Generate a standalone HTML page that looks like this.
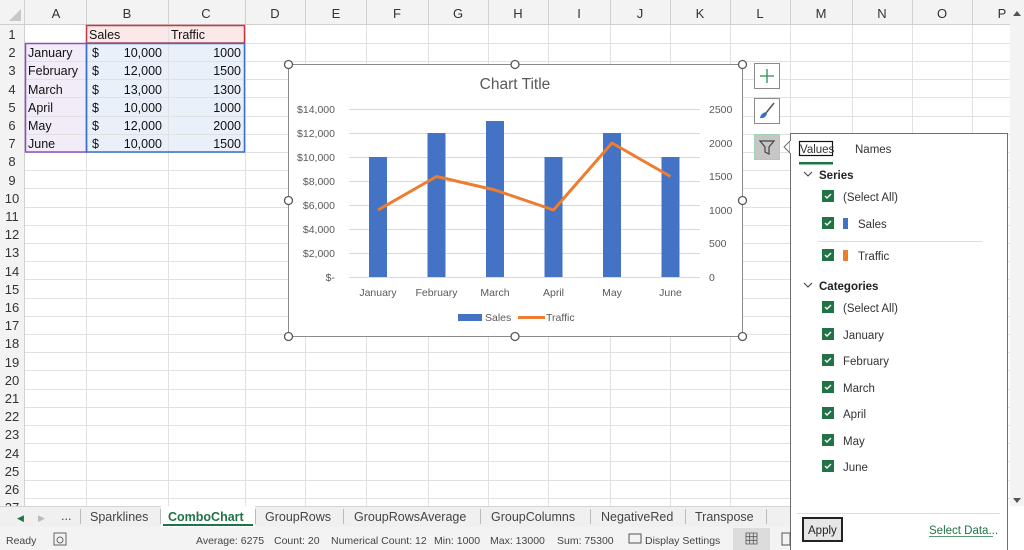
<!DOCTYPE html>
<html><head><meta charset="utf-8"><style>
html,body{margin:0;padding:0;width:1024px;height:550px;overflow:hidden;background:#fff;font-family:"Liberation Sans",sans-serif}
svg text{font-family:"Liberation Sans",sans-serif}
</style></head><body>
<svg width="1024" height="550" viewBox="0 0 1024 550" xmlns="http://www.w3.org/2000/svg">
<!-- header backgrounds -->
<rect x="0" y="0" width="1010" height="25" fill="#f3f3f3"/>
<rect x="0" y="0" width="25" height="506" fill="#f3f3f3"/>
<polygon points="9,21 21,21 21,9" fill="#c8c8c8"/>
<!-- selection shading -->
<rect x="86" y="25" width="159" height="18.2" fill="#fbe9e9"/>
<rect x="25" y="43.2" width="61" height="109.2" fill="#f1ecf7"/>
<rect x="86" y="43.2" width="159" height="109.2" fill="#eaf0fa"/>
<!-- grid -->
<g stroke="#e1e1e1" stroke-width="1">
<line x1="25" y1="43.5" x2="1010" y2="43.5"/><line x1="25" y1="61.5" x2="1010" y2="61.5"/><line x1="25" y1="79.5" x2="1010" y2="79.5"/><line x1="25" y1="97.5" x2="1010" y2="97.5"/><line x1="25" y1="116.5" x2="1010" y2="116.5"/><line x1="25" y1="134.5" x2="1010" y2="134.5"/><line x1="25" y1="152.5" x2="1010" y2="152.5"/><line x1="25" y1="170.5" x2="1010" y2="170.5"/><line x1="25" y1="188.5" x2="1010" y2="188.5"/><line x1="25" y1="207.5" x2="1010" y2="207.5"/><line x1="25" y1="225.5" x2="1010" y2="225.5"/><line x1="25" y1="243.5" x2="1010" y2="243.5"/><line x1="25" y1="261.5" x2="1010" y2="261.5"/><line x1="25" y1="279.5" x2="1010" y2="279.5"/><line x1="25" y1="298.5" x2="1010" y2="298.5"/><line x1="25" y1="316.5" x2="1010" y2="316.5"/><line x1="25" y1="334.5" x2="1010" y2="334.5"/><line x1="25" y1="352.5" x2="1010" y2="352.5"/><line x1="25" y1="370.5" x2="1010" y2="370.5"/><line x1="25" y1="389.5" x2="1010" y2="389.5"/><line x1="25" y1="407.5" x2="1010" y2="407.5"/><line x1="25" y1="425.5" x2="1010" y2="425.5"/><line x1="25" y1="443.5" x2="1010" y2="443.5"/><line x1="25" y1="461.5" x2="1010" y2="461.5"/><line x1="25" y1="480.5" x2="1010" y2="480.5"/><line x1="25" y1="498.5" x2="1010" y2="498.5"/>
<line x1="86.5" y1="25" x2="86.5" y2="506"/><line x1="168.5" y1="25" x2="168.5" y2="506"/><line x1="245.5" y1="25" x2="245.5" y2="506"/><line x1="305.5" y1="25" x2="305.5" y2="506"/><line x1="366.5" y1="25" x2="366.5" y2="506"/><line x1="428.5" y1="25" x2="428.5" y2="506"/><line x1="488.5" y1="25" x2="488.5" y2="506"/><line x1="548.5" y1="25" x2="548.5" y2="506"/><line x1="610.5" y1="25" x2="610.5" y2="506"/><line x1="670.5" y1="25" x2="670.5" y2="506"/><line x1="730.5" y1="25" x2="730.5" y2="506"/><line x1="790.5" y1="25" x2="790.5" y2="506"/><line x1="852.5" y1="25" x2="852.5" y2="506"/><line x1="912.5" y1="25" x2="912.5" y2="506"/><line x1="972.5" y1="25" x2="972.5" y2="506"/>
</g>
<g stroke="#d0d0d0">
<line x1="0" y1="24.5" x2="1010" y2="24.5"/><line x1="24.5" y1="0" x2="24.5" y2="506"/>
<line x1="86.5" y1="0" x2="86.5" y2="25"/><line x1="168.5" y1="0" x2="168.5" y2="25"/><line x1="245.5" y1="0" x2="245.5" y2="25"/><line x1="305.5" y1="0" x2="305.5" y2="25"/><line x1="366.5" y1="0" x2="366.5" y2="25"/><line x1="428.5" y1="0" x2="428.5" y2="25"/><line x1="488.5" y1="0" x2="488.5" y2="25"/><line x1="548.5" y1="0" x2="548.5" y2="25"/><line x1="610.5" y1="0" x2="610.5" y2="25"/><line x1="670.5" y1="0" x2="670.5" y2="25"/><line x1="730.5" y1="0" x2="730.5" y2="25"/><line x1="790.5" y1="0" x2="790.5" y2="25"/><line x1="852.5" y1="0" x2="852.5" y2="25"/><line x1="912.5" y1="0" x2="912.5" y2="25"/><line x1="972.5" y1="0" x2="972.5" y2="25"/>
</g>
<g font-size="13" fill="#333" text-anchor="middle">
<text x="56" y="18">A</text><text x="127" y="18">B</text><text x="206" y="18">C</text><text x="275" y="18">D</text><text x="336" y="18">E</text><text x="397" y="18">F</text><text x="458" y="18">G</text><text x="518" y="18">H</text><text x="579" y="18">I</text><text x="640" y="18">J</text><text x="700" y="18">K</text><text x="760" y="18">L</text><text x="821" y="18">M</text><text x="882" y="18">N</text><text x="942" y="18">O</text><text x="1002" y="18">P</text>
<text x="12" y="39">1</text><text x="12" y="57">2</text><text x="12" y="75">3</text><text x="12" y="94">4</text><text x="12" y="112">5</text><text x="12" y="130">6</text><text x="12" y="148">7</text><text x="12" y="166">8</text><text x="12" y="185">9</text><text x="12" y="203">10</text><text x="12" y="221">11</text><text x="12" y="239">12</text><text x="12" y="257">13</text><text x="12" y="276">14</text><text x="12" y="294">15</text><text x="12" y="312">16</text><text x="12" y="330">17</text><text x="12" y="348">18</text><text x="12" y="367">19</text><text x="12" y="385">20</text><text x="12" y="403">21</text><text x="12" y="421">22</text><text x="12" y="439">23</text><text x="12" y="458">24</text><text x="12" y="476">25</text><text x="12" y="494">26</text><text x="12" y="512">27</text>
</g>
<!-- data -->
<g font-size="12.5" fill="#111">
<text x="89" y="39">Sales</text><text x="171" y="39">Traffic</text>
<text x="28" y="57">January</text><text x="28" y="75">February</text><text x="28" y="94">March</text><text x="28" y="112">April</text><text x="28" y="130">May</text><text x="28" y="148">June</text>
<text x="92" y="57">$</text><text x="92" y="75">$</text><text x="92" y="94">$</text><text x="92" y="112">$</text><text x="92" y="130">$</text><text x="92" y="148">$</text>
</g>
<g font-size="12.5" fill="#111" text-anchor="end">
<text x="162" y="57">10,000</text><text x="162" y="75">12,000</text><text x="162" y="94">13,000</text><text x="162" y="112">10,000</text><text x="162" y="130">12,000</text><text x="162" y="148">10,000</text>
<text x="241" y="57">1000</text><text x="241" y="75">1500</text><text x="241" y="94">1300</text><text x="241" y="112">1000</text><text x="241" y="130">2000</text><text x="241" y="148">1500</text>
</g>
<!-- range outlines -->
<rect x="86.5" y="25.5" width="158" height="17.5" fill="none" stroke="#c8383f" stroke-width="1.5"/>
<rect x="25.5" y="43.5" width="61" height="108.5" fill="none" stroke="#8d4fc7" stroke-width="1.5"/>
<rect x="86.5" y="43.5" width="158" height="108.5" fill="none" stroke="#3b6dc9" stroke-width="1.5"/>
<!-- chart -->
<rect x="288.5" y="64.5" width="454" height="272" fill="#fff" stroke="#8a8a8a"/>
<text x="515" y="89" font-size="15.5" fill="#595959" text-anchor="middle">Chart Title</text>
<g stroke="#d9d9d9"><line x1="349" y1="109.5" x2="700" y2="109.5"/><line x1="349" y1="133.5" x2="700" y2="133.5"/><line x1="349" y1="157.5" x2="700" y2="157.5"/><line x1="349" y1="181.5" x2="700" y2="181.5"/><line x1="349" y1="205.5" x2="700" y2="205.5"/><line x1="349" y1="229.5" x2="700" y2="229.5"/><line x1="349" y1="253.5" x2="700" y2="253.5"/><line x1="349" y1="277.5" x2="700" y2="277.5"/></g>
<g font-size="10.5" fill="#595959" text-anchor="end">
<text x="335" y="113">$14,000</text><text x="335" y="137">$12,000</text><text x="335" y="161">$10,000</text><text x="335" y="185">$8,000</text><text x="335" y="209">$6,000</text><text x="335" y="233">$4,000</text><text x="335" y="257">$2,000</text><text x="335" y="281">$-</text>
</g>
<g font-size="10.5" fill="#595959">
<text x="709" y="113">2500</text><text x="709" y="147">2000</text><text x="709" y="180">1500</text><text x="709" y="214">1000</text><text x="709" y="247">500</text><text x="709" y="281">0</text>
</g>
<g fill="#4472c4">
<rect x="369" y="157" width="18" height="120"/><rect x="427.5" y="133" width="18" height="144"/><rect x="486" y="121" width="18" height="156"/><rect x="544.5" y="157" width="18" height="120"/><rect x="603" y="133" width="18" height="144"/><rect x="661.5" y="157" width="18" height="120"/>
</g>
<polyline points="378,210 436.5,176.5 495,190 553.5,210 612,143 670.5,176.5" fill="none" stroke="#ed7d31" stroke-width="3" stroke-linejoin="round"/>
<g font-size="10.5" fill="#595959" text-anchor="middle">
<text x="378" y="296">January</text><text x="436.5" y="296">February</text><text x="495" y="296">March</text><text x="553.5" y="296">April</text><text x="612" y="296">May</text><text x="670.5" y="296">June</text>
</g>
<rect x="458" y="314" width="24" height="7" fill="#4472c4"/>
<text x="485" y="321" font-size="10.5" fill="#595959">Sales</text>
<line x1="518" y1="317.5" x2="545" y2="317.5" stroke="#ed7d31" stroke-width="3"/>
<text x="546" y="321" font-size="10.5" fill="#595959">Traffic</text>
<g fill="#fff" stroke="#595959" stroke-width="1.3">
<circle cx="288.5" cy="64.5" r="4"/><circle cx="515" cy="64.5" r="4"/><circle cx="742.5" cy="64.5" r="4"/><circle cx="288.5" cy="200.5" r="4"/><circle cx="742.5" cy="200.5" r="4"/><circle cx="288.5" cy="336.5" r="4"/><circle cx="515" cy="336.5" r="4"/><circle cx="742.5" cy="336.5" r="4"/>
</g>
<!-- side buttons -->
<rect x="754.5" y="63.5" width="25" height="25" fill="#fff" stroke="#8a8a8a"/>
<path d="M767 69v14M760 76h14" stroke="#2e8b57" stroke-width="1.3"/>
<rect x="754.5" y="98.5" width="25" height="25" fill="#fff" stroke="#8a8a8a"/>
<path d="M774 103 L766 113" stroke="#555" stroke-width="1.5"/><path d="M766 112 Q761 113 760 118 Q765 119 767 114 Z" fill="#3b6dc9"/>
<rect x="754.5" y="134.5" width="25" height="25" fill="#c6c6c6" stroke="#9fd3b5"/>
<path d="M760 141h14l-5 6v7l-4 -2v-5z" fill="none" stroke="#444" stroke-width="1.2"/>
<!-- scrollbar -->
<rect x="1010" y="0" width="14" height="506" fill="#f3f3f3"/>
<polygon points="1013,16 1021,16 1017,11" fill="#555"/>
<polygon points="1013,498 1021,498 1017,503" fill="#555"/>
<!-- panel -->
<rect x="790.5" y="133.5" width="217" height="418" fill="#fff" stroke="#6e6e6e"/>
<polygon points="790,141 784,147 790,153" fill="#fff" stroke="#6e6e6e"/>
<line x1="791" y1="141" x2="791" y2="153" stroke="#fff" stroke-width="2"/>
<rect x="799.5" y="141.5" width="33" height="14" fill="none" stroke="#111" stroke-width="1.2"/>
<text x="800" y="153" font-size="11.5" fill="#333">Values</text>
<text x="855" y="153" font-size="11.5" fill="#333">Names</text>
<rect x="799" y="162" width="34" height="2.5" fill="#217346"/>
<path d="M804 172l4 4 4-4" fill="none" stroke="#444" stroke-width="1.1"/>
<text x="819" y="179" font-size="11.5" font-weight="bold" fill="#222">Series</text>
<path d="M804 283l4 4 4-4" fill="none" stroke="#444" stroke-width="1.1"/>
<text x="819" y="290" font-size="11.5" font-weight="bold" fill="#222">Categories</text>
<line x1="818" y1="241.5" x2="982" y2="241.5" stroke="#ddd"/>
<g fill="#217346">
<rect x="822" y="190" width="12" height="12"/><rect x="822" y="217" width="12" height="12"/><rect x="822" y="249" width="12" height="12"/><rect x="822" y="301" width="12" height="12"/><rect x="822" y="328" width="12" height="12"/><rect x="822" y="354" width="12" height="12"/><rect x="822" y="381" width="12" height="12"/><rect x="822" y="407" width="12" height="12"/><rect x="822" y="434" width="12" height="12"/><rect x="822" y="460" width="12" height="12"/>
</g>
<g fill="none" stroke="#fff" stroke-width="1.4">
<path d="M825 196l2 2 4-4"/><path d="M825 223l2 2 4-4"/><path d="M825 255l2 2 4-4"/><path d="M825 307l2 2 4-4"/><path d="M825 334l2 2 4-4"/><path d="M825 360l2 2 4-4"/><path d="M825 387l2 2 4-4"/><path d="M825 413l2 2 4-4"/><path d="M825 440l2 2 4-4"/><path d="M825 466l2 2 4-4"/>
</g>
<rect x="843" y="218" width="5" height="11" fill="#4472c4"/>
<rect x="843" y="250" width="5" height="11" fill="#ed7d31"/>
<g font-size="11.5" fill="#333">
<text x="843" y="201">(Select All)</text><text x="858" y="228">Sales</text><text x="858" y="260">Traffic</text>
<text x="843" y="312">(Select All)</text><text x="843" y="339">January</text><text x="843" y="365">February</text><text x="843" y="392">March</text><text x="843" y="418">April</text><text x="843" y="445">May</text><text x="843" y="471">June</text>
</g>
<line x1="797" y1="513.5" x2="1000" y2="513.5" stroke="#ddd"/>
<rect x="803" y="518" width="39" height="23" fill="#e6e6e6" stroke="#222" stroke-width="2"/>
<text x="808" y="534" font-size="11.5" fill="#222">Apply</text>
<text x="929" y="534" font-size="11.5" fill="#217346">Select Data...</text>
<line x1="929" y1="536.5" x2="993" y2="536.5" stroke="#217346" stroke-width="0.8"/>
<!-- tab bar -->
<rect x="0" y="506" width="790" height="21" fill="#f0f0f0"/>
<line x1="0" y1="506.5" x2="790" y2="506.5" stroke="#d4d4d4"/>
<g font-size="12.5" fill="#444">
<text x="17" y="521" font-size="9" fill="#217346">◀</text><text x="38" y="521" font-size="9" fill="#bbb">▶</text><text x="61" y="520">...</text>
<text x="90" y="521">Sparklines</text><text x="265" y="521">GroupRows</text><text x="354" y="521">GroupRowsAverage</text><text x="491" y="521">GroupColumns</text><text x="601" y="521">NegativeRed</text><text x="695" y="521">Transpose</text>
</g>
<rect x="161" y="506" width="94" height="21" fill="#fff"/>
<text x="168" y="521" font-size="12.5" font-weight="bold" fill="#217346">ComboChart</text>
<rect x="163" y="524" width="90" height="2" fill="#217346"/>
<g stroke="#bbb"><line x1="80.5" y1="509" x2="80.5" y2="524"/><line x1="160.5" y1="509" x2="160.5" y2="524"/><line x1="255.5" y1="509" x2="255.5" y2="524"/><line x1="343.5" y1="509" x2="343.5" y2="524"/><line x1="480.5" y1="509" x2="480.5" y2="524"/><line x1="590.5" y1="509" x2="590.5" y2="524"/><line x1="685.5" y1="509" x2="685.5" y2="524"/><line x1="766.5" y1="509" x2="766.5" y2="524"/></g>
<!-- status bar -->
<rect x="0" y="527" width="790" height="23" fill="#f3f3f3"/>
<g font-size="10.5" fill="#444">
<text x="6" y="544">Ready</text>
<text x="196" y="544">Average: 6275</text><text x="274" y="544">Count: 20</text><text x="331" y="544">Numerical Count: 12</text><text x="434" y="544">Min: 1000</text><text x="490" y="544">Max: 13000</text><text x="557" y="544">Sum: 75300</text><text x="645" y="544">Display Settings</text>
</g>
<rect x="54" y="533" width="12" height="12" fill="none" stroke="#666"/>
<circle cx="60" cy="540" r="3" fill="none" stroke="#666"/>
<rect x="629" y="534" width="12" height="9" fill="none" stroke="#555"/>
<rect x="733" y="528" width="37" height="22" fill="#dcdcdc"/>
<path d="M746 533h11v11h-11zM746 536.7h11M746 540.3h11M749.7 533v11M753.3 533v11" fill="none" stroke="#555" stroke-width="0.8"/>
<rect x="782" y="533" width="8" height="12" fill="none" stroke="#555"/>
</svg>
</body></html>
